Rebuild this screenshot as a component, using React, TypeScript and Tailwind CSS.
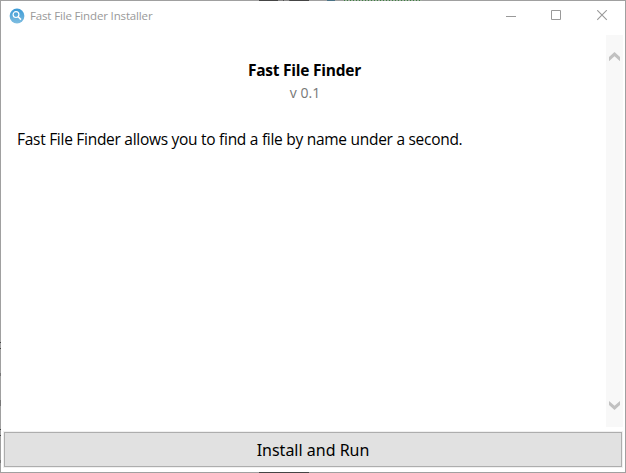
function AppIcon() {
  return (
    <svg width="16" height="16" viewBox="0 0 16 16" className="shrink-0">
      <defs>
        <linearGradient id="disc" x1="0" y1="0" x2="0" y2="1">
          <stop offset="0" stopColor="#3a9ad6" />
          <stop offset="1" stopColor="#7fbde0" />
        </linearGradient>
      </defs>
      <circle cx="8" cy="8" r="7.4" fill="url(#disc)" />
      <circle cx="7" cy="6.6" r="2.9" fill="none" stroke="#fff" strokeWidth="1.2" />
      <path d="M9.2 8.8l2.8 2.8" stroke="#fff" strokeWidth="1.5" />
    </svg>
  );
}

function TitleBar() {
  return (
    <header className="flex h-[34px] shrink-0 items-start justify-between pl-2 pr-[17px] font-['Open_Sans',sans-serif]">
      <div className="flex h-[29px] items-center gap-[5px]">
        <AppIcon />
        <h1 className="whitespace-nowrap text-[11.5px] leading-4 tracking-[-0.15px] text-[#999]">Fast File Finder Installer</h1>
      </div>
      <div className="flex h-[29px] items-center gap-[35px] text-[#999]">
        <svg width="10" height="11" viewBox="0 0 10 11"><path d="M0 6.5h10" stroke="currentColor" /></svg>
        <svg width="11" height="11" viewBox="0 0 11 11"><path d="M.5.5h9v9h-9z" fill="none" stroke="currentColor" /></svg>
        <svg width="11" height="11" viewBox="0 0 11 11"><path d="M.2.2l9.6 9.6M9.8.2L.2 9.8" stroke="currentColor" strokeWidth="1.1" /></svg>
      </div>
    </header>
  );
}

function ScrollBar() {
  return (
    <div className="flex w-[17px] shrink-0 flex-col items-center justify-between bg-[#f8f8f8] py-[17px] text-[#c1c1c1]">
      <svg width="11" height="9" viewBox="0 0 11 9"><path d="M0 5L5.5 0 11 5V9.2L5.5 4.2 0 9.2z" fill="currentColor" /></svg>
      <svg width="11" height="9" viewBox="0 0 11 9"><path d="M0 4L5.5 9 11 4V0L5.5 4.8 0 0z" fill="currentColor" /></svg>
    </div>
  );
}

/* Slivers of the desktop that show through the window's one-pixel frame. */
function EdgeMarks() {
  return (
    <div className="pointer-events-none absolute -inset-px flex flex-col justify-between">
      <div className="flex h-px pl-[259px]">
        <i className="w-[19px] bg-[#444]" />
        <i className="w-[12px] bg-[repeating-linear-gradient(90deg,#8a8a8a_0_5px,#555_5px_6px)]" />
        <i className="w-[19px] bg-[#444]" />
        <i className="ml-[18px] w-[8px] bg-[#4a7285]" />
        <i className="ml-[9px] w-[78px] bg-[repeating-linear-gradient(90deg,#3f7f42_0_1px,#a0aaa0_1px_3px)]" />
      </div>
      <div className="w-px flex-1 bg-[linear-gradient(180deg,transparent_341px,#444_341px_342px,transparent_342px_347px,#444_347px_348px,transparent_348px_372px,#777_372px_375px,transparent_375px_399px,#777_399px_405px,transparent_405px_428px,#444_428px_429px,transparent_429px_434px,#444_434px_435px,transparent_435px_459px,#777_459px_462px,transparent_462px)]" />
      <div className="flex h-px pl-[259px]"><i className="w-[50px] bg-[#444]" /></div>
    </div>
  );
}

export default function App() {
  return (
    <div className="relative flex h-[473px] w-[626px] flex-col border border-[#a0a0a0] bg-white">
      <TitleBar />
      <main className="flex h-[392px] shrink-0 pr-[2px]">
        <section className="flex-1 px-4 pt-6 font-['Open_Sans',sans-serif] text-black">
          <h2 className="pl-[2px] text-center text-[15.5px] font-bold leading-[22px] tracking-[-0.24px]">Fast File Finder</h2>
          <p className="pl-[3px] text-center text-[14px] leading-[24px] text-[#777]">v 0.1</p>
          <p className="mt-[23px] whitespace-nowrap text-[15.5px] leading-[22px] tracking-[-0.28px]">Fast File Finder allows you to find a file by name under a second.</p>
        </section>
        <ScrollBar />
      </main>
      <footer className="mt-[5px] flex shrink-0 px-[3px]">
        <button className="h-[35px] w-full border border-[#adadad] bg-[#e1e1e1] pt-px font-['Noto_Sans',sans-serif] text-[16px] leading-[32px] text-black shadow-[0_0_0_1px_#f0f0f0]">Install and Run</button>
      </footer>
      <EdgeMarks />
    </div>
  );
}
